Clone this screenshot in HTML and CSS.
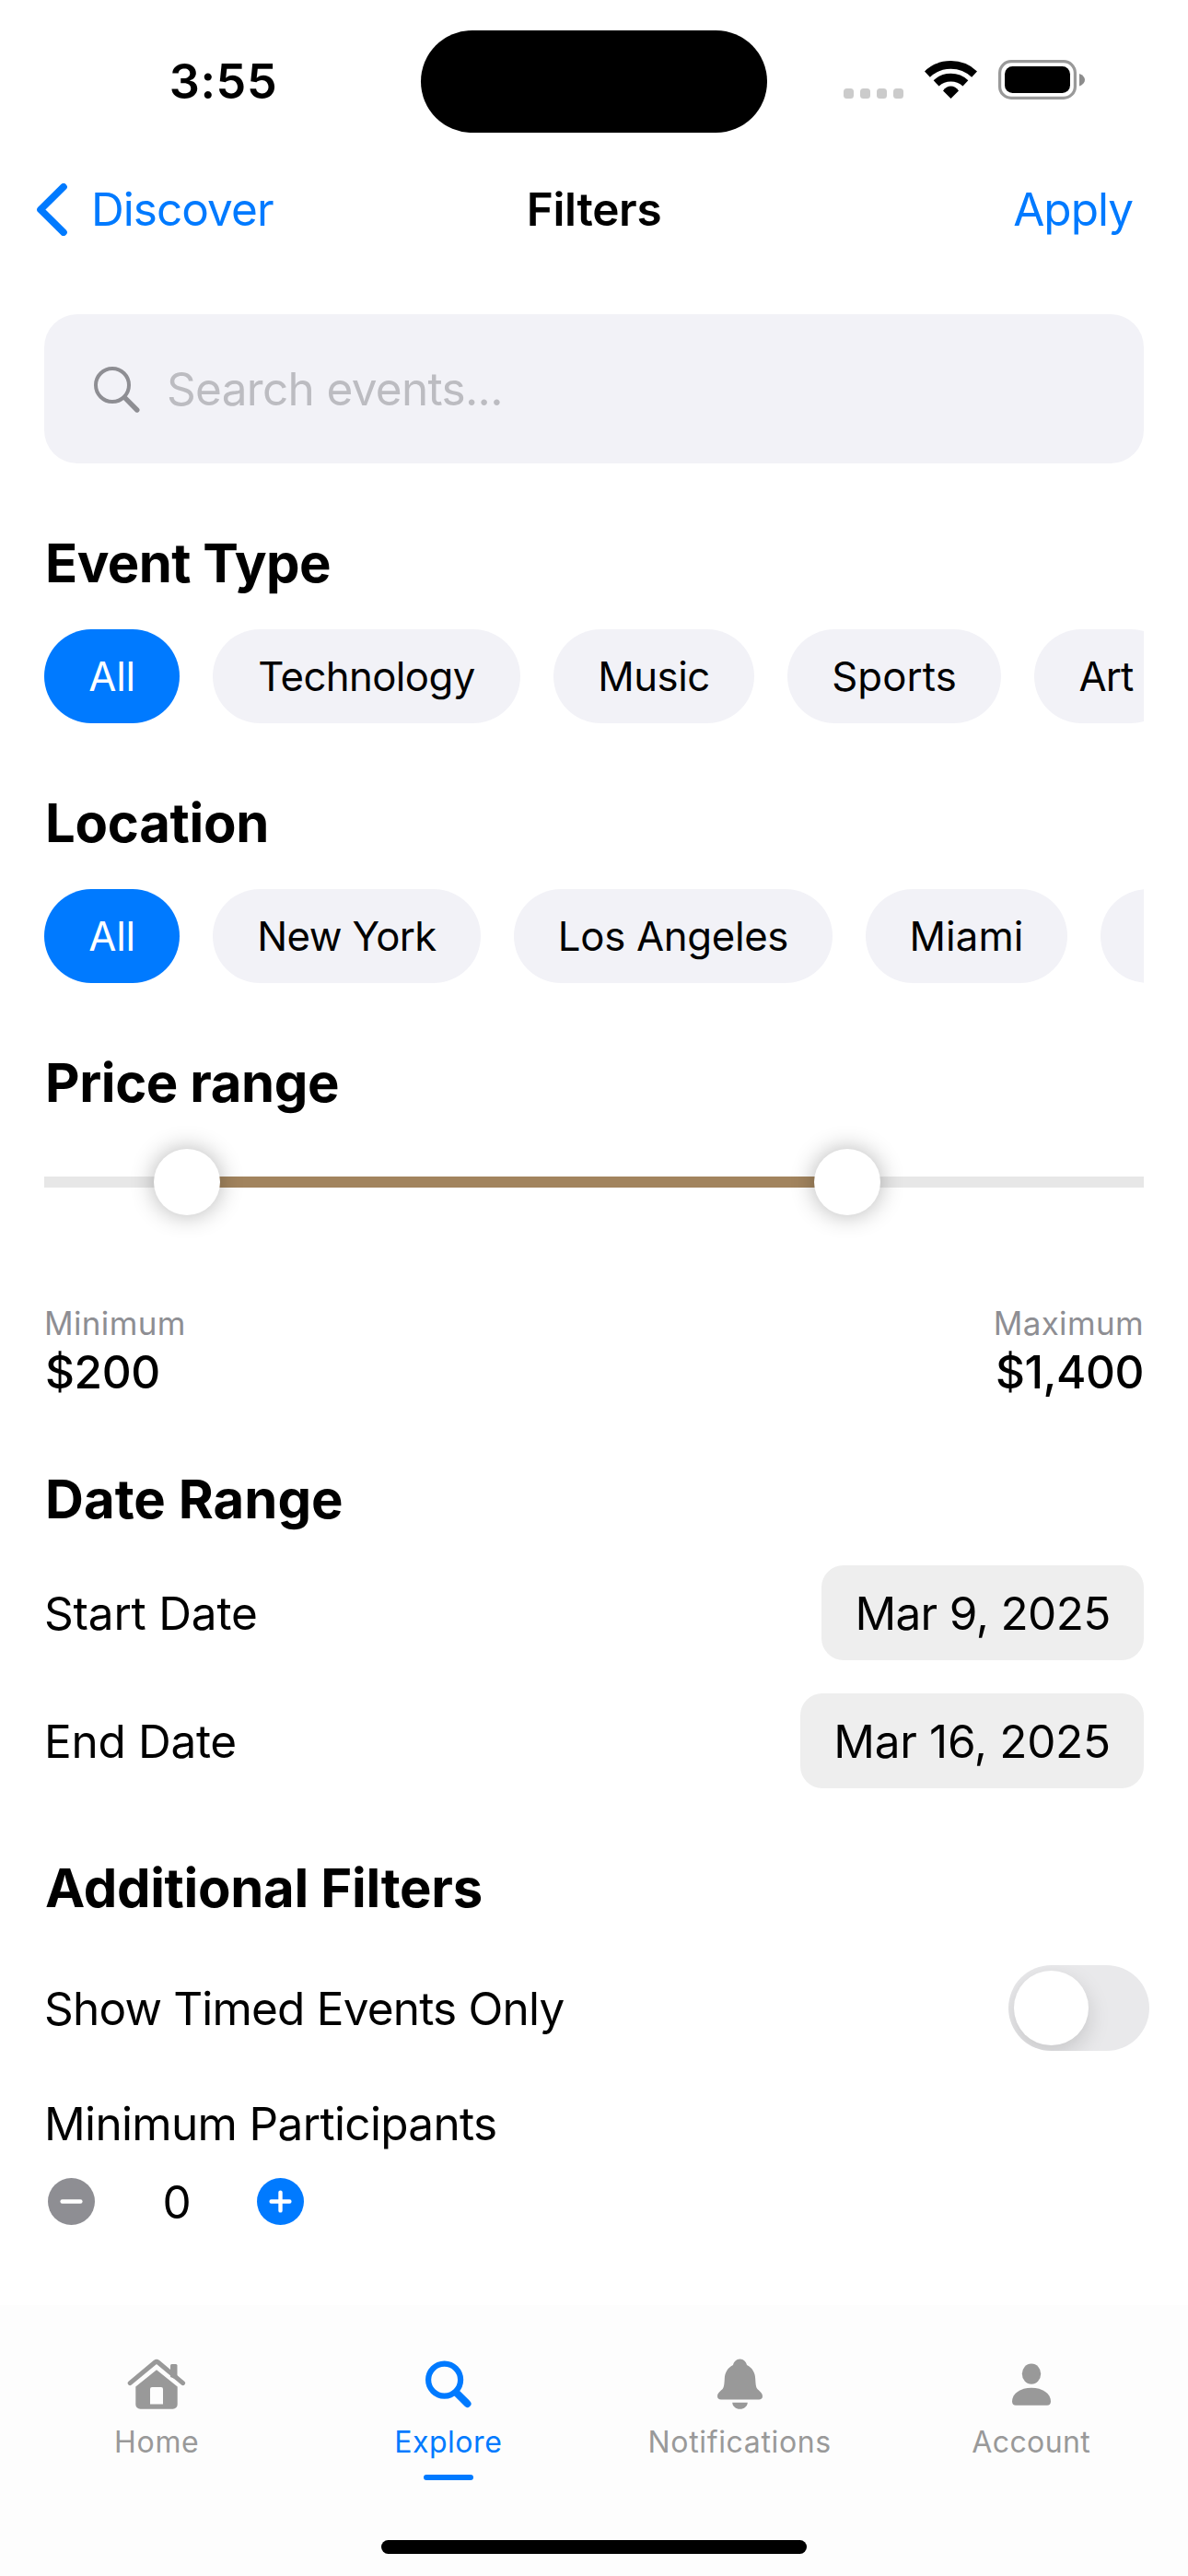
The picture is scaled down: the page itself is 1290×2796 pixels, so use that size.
FILE: index.html
```html
<!DOCTYPE html>
<html lang="en">
<head>
<meta charset="utf-8">
<title>Filters</title>
<link rel="stylesheet" href="styles.css">
</head>
<body>
<div class="screen">
  <div class="status">
    <div class="time">3:55</div>
    <div class="island"></div>
    <div class="indicators">
      <svg width="65" height="43" viewBox="0 0 65 43" fill="#cbcbcb"><rect y="31" width="11" height="11" rx="3.5"/><rect x="18" y="31" width="11" height="11" rx="3.5"/><rect x="36" y="31" width="11" height="11" rx="3.5"/><rect x="54" y="31" width="11" height="11" rx="3.5"/></svg>
      <svg width="57" height="43" viewBox="0 0 57 43" fill="none" stroke="#000" stroke-width="8.6"><path d="M2.9 15.6A37.2 37.2 0 0 1 54.1 15.6M12.6 25.4A23.4 23.4 0 0 1 44.4 25.4"/><path fill="#000" stroke="none" d="M28.5 42 20 33.4Q23.6 28.6 28.5 28.6T37 33.4Z"/></svg>
      <svg width="94" height="43" viewBox="0 0 94 43"><rect x="1.6" y="1.6" width="81.8" height="39.8" rx="12.5" fill="none" stroke="#999" stroke-width="3.2"/><rect x="7" y="7" width="71" height="29" rx="8.5"/><path d="M88 15C92 16.5 94 19 94 21.7S92 27 88 28.4Z" fill="#8c8c8c"/></svg>
    </div>
  </div>

  <nav class="nav">
    <div class="back">
      <svg width="33" height="57" viewBox="0 0 33 57" fill="none" stroke="#007aff" stroke-width="7.6" stroke-linecap="round" stroke-linejoin="round"><path d="M29 3.8 4 28.5 29 53.2"/></svg>
      <span class="discover">Discover</span>
    </div>
    <div class="title">Filters</div>
    <div class="apply">Apply</div>
  </nav>

  <main class="main">
    <div class="search">
      <svg width="50" height="51" viewBox="0 0 50 51" fill="none" stroke="#8e8e93" stroke-linecap="round"><circle cx="20" cy="21" r="18" stroke-width="4"/><path d="M34 35.2 46.8 48" stroke-width="5.4"/></svg>
      <span>Search events...</span>
    </div>

    <section class="section">
      <h2 class="t-event">Event Type</h2>
      <div class="chips">
        <span class="chip all">All</span>
        <span class="chip technology">Technology</span>
        <span class="chip music">Music</span>
        <span class="chip sports">Sports</span>
        <span class="chip art">Art</span>
      </div>
    </section>

    <section class="section">
      <h2 class="t-location">Location</h2>
      <div class="chips">
        <span class="chip all">All</span>
        <span class="chip newyork">New York</span>
        <span class="chip losangeles">Los Angeles</span>
        <span class="chip miami">Miami</span>
        <span class="chip more"></span>
      </div>
    </section>

    <section class="section">
      <h2 class="t-price">Price range</h2>
      <div class="slider">
        <div class="track"><div class="fill"></div></div>
        <div class="thumb thumb-min"></div>
        <div class="thumb thumb-max"></div>
      </div>
      <div class="prices">
        <div><div class="label label-min">Minimum</div><div class="value value-min">$200</div></div>
        <div><div class="label label-max">Maximum</div><div class="value value-max">$1,400</div></div>
      </div>
    </section>

    <section class="section">
      <h2 class="t-date">Date Range</h2>
      <div class="dates">
        <div class="row"><span class="start">Start Date</span><span class="pill pill-start">Mar 9, 2025</span></div>
        <div class="row"><span class="end">End Date</span><span class="pill pill-end">Mar 16, 2025</span></div>
      </div>
    </section>

    <section class="section">
      <h2 class="t-additional">Additional Filters</h2>
      <div class="row timed"><span class="timed-label">Show Timed Events Only</span><div class="toggle"><div class="knob"></div></div></div>
      <div class="participants">Minimum Participants</div>
      <div class="stepper">
        <svg width="51" height="51" viewBox="0 0 51 51" stroke="#fff" stroke-width="4.4" stroke-linecap="round"><circle cx="25.5" cy="25.5" r="25.5" fill="#8e8e93" stroke="none"/><path d="M15.6 25.5H35.4"/></svg>
        <span class="count">0</span>
        <svg width="51" height="51" viewBox="0 0 51 51" stroke="#fff" stroke-width="4.4" stroke-linecap="round"><circle cx="25.5" cy="25.5" r="25.5" fill="#007aff" stroke="none"/><path d="M15.6 25.5H35.4M25.5 15.6V35.4"/></svg>
      </div>
    </section>
  </main>

  <footer class="footer">
    <div class="tabs">
      <div class="tab home">
        <svg width="64" height="56" viewBox="18 20 64 56" fill="#999"><path d="M21.2 46.6 48.4 24Q50 22.8 51.6 24L78.6 46.6" fill="none" stroke="#999" stroke-width="5" stroke-linecap="round" stroke-linejoin="round"/><path d="M65 40V27.5Q65 26 66.5 26H71Q72.5 26 72.5 27.5V43Z"/><path fill-rule="evenodd" d="M50 32.3 72.7 50.5V69.7a5 5 0 0 1-5 5H32.3a5 5 0 0 1-5-5V50.5ZM45 51Q43 51 43 53V69.5H57V53Q57 51 55 51Z"/></svg>
        <span>Home</span>
      </div>
      <div class="tab explore">
        <svg width="50" height="56" viewBox="0 0 50 56" fill="none" stroke="#007aff" stroke-linecap="round"><circle cx="20.6" cy="23.1" r="17.5" stroke-width="6.2"/><path d="M33.5 37 45.5 49" stroke-width="8"/></svg>
        <span>Explore</span>
        <i class="underline"></i>
      </div>
      <div class="tab notifications">
        <svg width="49" height="56" viewBox="0 0 49 56" fill="#999"><path d="M24.5.5C20.5.5 17.8 3.5 17 7 11 10 8 15.5 7.8 22 7.5 28 7 31 6 32.5 4 35 0 37 0 41 0 43.2 1.5 44.4 4 44.4H45C47.5 44.4 49 43.2 49 41 49 37 45 35 43 32.5 42 31 41.5 28 41.2 22 41 15.5 38 10 32 7 31.2 3.5 28.5.5 24.5.5ZM16.2 47.7H32.8C32.5 52 29 54.7 24.5 54.7S16.5 52 16.2 47.7Z"/></svg>
        <span>Notifications</span>
      </div>
      <div class="tab account">
        <svg width="42" height="56" viewBox="0 0 42 56" fill="#999"><ellipse cx="21" cy="16.6" rx="10.2" ry="11.2"/><path d="M0 46.5C0 38 9 31.8 21 31.8S42 38 42 46.5C42 49.3 40.5 50.8 38 50.8H4C1.5 50.8 0 49.3 0 46.5Z"/></svg>
        <span>Account</span>
      </div>
    </div>
    <div class="home-indicator"></div>
  </footer>
</div>
</body>
</html>
```
FILE: styles.css
```css
* { box-sizing: border-box; }
body { margin: 0; background: #fff; color: #000; font-family: Inter, sans-serif; font-size: 49.5px; line-height: 60px; }
svg { display: block; flex: none; }
.screen { display: flex; flex-direction: column; width: 1290px; height: 2796px; overflow: hidden; white-space: nowrap; }

/* Status bar */
.status { display: grid; grid-template-columns: 457px 376px 457px; height: 177px; padding-top: 33px; }
.time { height: 111px; padding-left: 28px; text-align: center; font-size: 52px; font-weight: 600; line-height: 111px; letter-spacing: .6px; }
.island { height: 111px; border-radius: 56px; background: #000; }
.indicators { display: flex; gap: 23px; padding: 32px 0 0 83px; }

/* Navigation */
.nav { display: grid; grid-template-columns: 1fr auto 1fr; align-items: center; height: 100px; padding: 0 40px; }
.back { display: flex; align-items: center; gap: 26px; color: #007aff; }
.discover { letter-spacing: -.95px; }
.title { font-weight: 600; letter-spacing: -.3px; }
.apply { padding-right: 20px; text-align: right; color: #007aff; letter-spacing: -1px; }

/* Content */
.main { flex: 1; padding: 64px 48px 0; }
.search { display: flex; align-items: center; gap: 29px; height: 162px; padding-left: 54px; border-radius: 36px; background: #f2f2f7; color: #bcbcc1; letter-spacing: -.68px; }
.section { margin-top: 72px; }
h2 { margin: 0 0 36px; padding-left: 1px; font-size: 58px; font-weight: 700; line-height: 72px; }
.t-event { letter-spacing: -.57px; }
.t-location { letter-spacing: -.28px; }
.t-price { letter-spacing: -.4px; }
.t-date { letter-spacing: .04px; }
.t-additional { margin-bottom: 48px; letter-spacing: -.3px; }

.chips { display: flex; gap: 36px; overflow: hidden; }
.chip { flex: none; height: 102px; border-radius: 51px; background: #f2f2f7; text-align: center; font-size: 43.7px; line-height: 103px; }
.all { width: 147px; background: #007aff; color: #fff; letter-spacing: -.3px; }
.technology { width: 334px; letter-spacing: -.58px; }
.music { width: 218px; letter-spacing: -.48px; }
.sports { width: 232px; letter-spacing: .1px; }
.art { width: 156px; letter-spacing: -.9px; }
.newyork { width: 291px; letter-spacing: -.61px; }
.losangeles { width: 346px; letter-spacing: -.3px; }
.miami { width: 219px; letter-spacing: .1px; }
.more { width: 260px; }

.slider { position: relative; display: flex; align-items: center; height: 72px; }
.track { width: 100%; height: 12px; background: #e7e7e7; }
.fill { width: 717px; height: 12px; margin-left: 155px; background: #a2845e; }
.thumb { position: absolute; top: 0; width: 72px; height: 72px; border-radius: 50%; background: #fff; box-shadow: 0 0 26px rgba(0, 0, 0, .3); }
.thumb-min { left: 119px; }
.thumb-max { left: 836px; }

.prices { display: flex; justify-content: space-between; margin-top: 96px; }
.label { font-size: 35px; line-height: 42px; color: #8e8e93; }
.label-min { letter-spacing: .35px; }
.label-max { letter-spacing: .35px; }
.value { margin-top: 2px; font-weight: 500; }
.value-min { padding-left: 1px; letter-spacing: -.4px; }
.value-max { text-align: right; letter-spacing: -.5px; }

.row { display: flex; align-items: center; justify-content: space-between; }
.dates { display: grid; gap: 36px; }
.start { letter-spacing: -.2px; }
.end { letter-spacing: -.3px; }
.pill { height: 103px; border-radius: 24px; background: #eee; text-align: center; line-height: 104px; }
.pill-start { width: 350px; letter-spacing: -.65px; }
.pill-end { width: 373px; letter-spacing: -.3px; }

.timed { height: 93px; }
.timed-label { letter-spacing: -.81px; }
.toggle { width: 153px; height: 93px; margin-right: -6px; padding: 6px; border-radius: 47px; background: #e9e9eb; overflow: hidden; }
.knob { width: 81px; height: 81px; border-radius: 50%; background: #fff; box-shadow: 0 9px 24px rgba(0, 0, 0, .15); }
.participants { margin-top: 49px; letter-spacing: -.66px; }
.stepper { display: flex; align-items: center; height: 51px; margin: 29px 0 0 4px; }
.count { width: 176px; padding-left: 2px; text-align: center; }

/* Tab bar */
.footer { height: 294px; padding: 58px 12px 0; background: #fdfdfd; }
.tabs { display: grid; grid-template-columns: repeat(4, 1fr); height: 197px; }
.tab { display: flex; flex-direction: column; align-items: center; font-size: 32px; line-height: 40px; color: #999; }
.tab span { margin-top: 15px; }
.home { letter-spacing: .67px; }
.explore { color: #007aff; letter-spacing: .54px; }
.notifications { letter-spacing: .65px; }
.account { letter-spacing: .39px; }
.underline { width: 54px; height: 6px; margin-top: 15px; border-radius: 3px; background: #007aff; }
.home-indicator { width: 462px; height: 15px; margin: 0 auto; border-radius: 8px; background: #000; }
```
